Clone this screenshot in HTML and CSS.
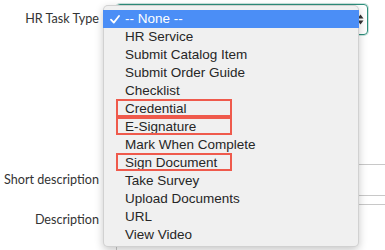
FILE: index.html
```html
<!DOCTYPE html>
<html>
<head>
<meta charset="utf-8">
<link rel="stylesheet" href="styles.css">
</head>
<body>
<div class="form">
  <div class="row row-type">
    <div class="label">HR Task Type</div>
    <div class="select">
      <span class="arrows">
        <svg width="7" height="11" viewBox="0 0 7 11"><path d="M3.5 0.5 L6.5 4.5 L0.5 4.5 Z M3.5 10.5 L6.5 6.5 L0.5 6.5 Z" fill="#333"/></svg>
      </span>
    </div>
  </div>
  <div class="row row-short">
    <div class="label">Short description</div>
    <div class="input"></div>
  </div>
  <div class="row row-desc">
    <div class="label">Description</div>
    <div class="textarea"></div>
  </div>

  <ul class="menu">
    <li class="item selected"><svg class="check" width="10" height="9" viewBox="0 0 10 9"><path d="M1 4.6 L3.8 7.6 L9 1" fill="none" stroke="#fff" stroke-width="1.8" stroke-linecap="round" stroke-linejoin="round"/></svg>-- None --</li>
    <li class="item">HR Service</li>
    <li class="item">Submit Catalog Item</li>
    <li class="item">Submit Order Guide</li>
    <li class="item">Checklist</li>
    <li class="item">Credential<span class="mark"></span></li>
    <li class="item">E-Signature<span class="mark"></span></li>
    <li class="item">Mark When Complete</li>
    <li class="item">Sign Document<span class="mark"></span></li>
    <li class="item">Take Survey</li>
    <li class="item">Upload Documents</li>
    <li class="item">URL</li>
    <li class="item">View Video</li>
  </ul>
</div>
</body>
</html>
```

FILE: styles.css
```css
* { box-sizing: border-box; }
html, body { margin: 0; padding: 0; background: #fff; }
body { width: 385px; height: 250px; overflow: hidden; }

.form {
  position: relative;
  width: 385px;
  height: 250px;
  overflow: hidden;
  font-family: Lato, "Open Sans", sans-serif;
  font-size: 12.6px;
  color: #333;
}

.row {
  display: flex;
  align-items: flex-start;
}

.label {
  width: 100px;
  flex: none;
  text-align: right;
  padding-right: 1px;
  white-space: nowrap;
}

.row-type { padding-top: 3px; height: 35px; align-items: center; }
.row-type .label { line-height: 32px; }

.select {
  margin-left: 16px;
  width: 252px;
  height: 31px;
  border: 1px solid #2e8f7c;
  border-radius: 4px;
  box-shadow: 0 0 0 1px rgba(46,143,124,0.25);
  display: flex;
  align-items: center;
  justify-content: flex-end;
  padding-right: 3px;
}
.arrows { display: flex; }

.row-short { margin-top: 129px; height: 40px; }
.row-short .label { line-height: 31px; }
.input {
  margin-left: 16px;
  flex: 1;
  height: 32px;
  border: 1px solid #c8c8c8;
  border-right: none;
}

.row-desc { height: 46px; }
.row-desc .label { padding-top: 7px; line-height: 18px; }
.textarea {
  margin-left: 16px;
  flex: 1;
  height: 46px;
  border: 1px solid #c8c8c8;
  border-right: none;
  border-bottom: none;
}

.menu {
  position: absolute;
  left: 103px;
  top: 5px;
  width: 256px;
  height: 242px;
  margin: 0;
  padding: 4px 0;
  list-style: none;
  background: #f0f0f0;
  border: 1px solid rgba(0,0,0,0.13);
  border-radius: 5px;
  box-shadow: 0 3px 9px rgba(0,0,0,0.22);
  font-family: "Liberation Sans", Arial, sans-serif;
  font-size: 13.5px;
  color: #262626;
}

.item {
  position: relative;
  height: 18px;
  line-height: 18px;
  padding-left: 21px;
  white-space: nowrap;
}

.item.selected {
  background: #4b8ef6;
  color: #fff;
  margin: 0 -1px;
  padding-left: 22px;
}

.check {
  position: absolute;
  left: 7px;
  top: 5px;
}

.mark {
  position: absolute;
  left: 12px;
  top: -1px;
  width: 116px;
  height: 18px;
  border: 2px solid #ef5a4c;
}
```
